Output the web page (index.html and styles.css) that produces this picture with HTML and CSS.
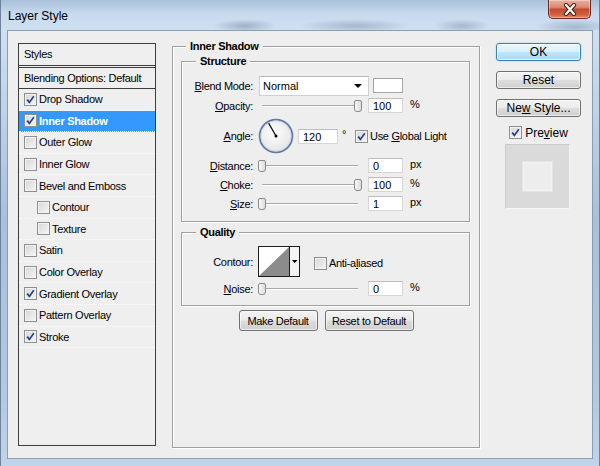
FILE: index.html
```html
<!DOCTYPE html>
<html>

<head>
    <link rel="stylesheet" href="styles.css">
</head>

<body>
    <div class="window">
        <div class="titlebar">
            <span class="title">Layer Style</span>
            <div class="close">
                <svg width="18" height="13" viewBox="0 0 18 13">
                    <path d="M5 2 L13 11 M13 2 L5 11" stroke="#4a2018" stroke-width="4.2" stroke-linecap="round" />
                    <path d="M5 2 L13 11 M13 2 L5 11" stroke="#fff" stroke-width="2.2" stroke-linecap="round" />
                </svg>
            </div>
        </div>

        <div class="client">
            <!-- left list of effects -->
            <div class="styles-list">
                <div class="list-head">Styles</div>
                <div class="list-blend">Blending Options: Default</div>
                <div class="item"><span class="cb on"><svg viewBox="0 0 11 11"><path d="M2.2 5.6 L4.4 8.4 L8.8 2.2" /></svg></span>Drop Shadow</div>
                <div class="item sel"><span class="cb on"><svg viewBox="0 0 11 11"><path d="M2.2 5.6 L4.4 8.4 L8.8 2.2" /></svg></span>Inner Shadow</div>
                <div class="item"><span class="cb"></span>Outer Glow</div>
                <div class="item"><span class="cb"></span>Inner Glow</div>
                <div class="item"><span class="cb"></span>Bevel and Emboss</div>
                <div class="item indent"><span class="cb"></span>Contour</div>
                <div class="item indent"><span class="cb"></span>Texture</div>
                <div class="item"><span class="cb"></span>Satin</div>
                <div class="item"><span class="cb"></span>Color Overlay</div>
                <div class="item"><span class="cb on"><svg viewBox="0 0 11 11"><path d="M2.2 5.6 L4.4 8.4 L8.8 2.2" /></svg></span>Gradient Overlay</div>
                <div class="item"><span class="cb"></span>Pattern Overlay</div>
                <div class="item"><span class="cb on"><svg viewBox="0 0 11 11"><path d="M2.2 5.6 L4.4 8.4 L8.8 2.2" /></svg></span>Stroke</div>
            </div>

            <!-- settings -->
            <div class="group main">
                <div class="legend">Inner Shadow</div>

                <div class="group sub structure">
                    <div class="legend">Structure</div>

                    <div class="row blend">
                        <span class="lbl"><u>B</u>lend Mode:</span>
                        <div class="select"><span>Normal</span><span class="arrow"></span></div>
                        <span class="swatch"></span>
                    </div>

                    <div class="row">
                        <span class="lbl"><u>O</u>pacity:</span>
                        <div class="slider"><span class="thumb max"></span></div>
                        <span class="field">100</span>
                        <span class="unit">%</span>
                    </div>

                    <div class="row angle">
                        <span class="lbl"><u>A</u>ngle:</span>
                        <svg class="dial" width="36" height="36" viewBox="0 0 36 36">
                            <defs>
                                <radialGradient id="dialFill" cx="0.45" cy="0.4" r="0.6">
                                    <stop offset="0" stop-color="#ffffff" />
                                    <stop offset="1" stop-color="#e4e4e4" />
                                </radialGradient>
                            </defs>
                            <circle cx="18" cy="18" r="16.4" fill="url(#dialFill)" stroke="#5f7aa3" stroke-width="1.8" />
                            <circle cx="18" cy="18" r="15.2" fill="none" stroke="#c9d3e2" stroke-width="0.8" />
                            <line x1="18" y1="18" x2="10.6" y2="5.2" stroke="#111" stroke-width="1.3" />
                            <circle cx="18" cy="18" r="1.5" fill="#000" />
                        </svg>
                        <span class="field wide">120</span>
                        <span class="deg">°</span>
                        <span class="cb on"><svg viewBox="0 0 11 11"><path d="M2.2 5.6 L4.4 8.4 L8.8 2.2" /></svg></span>
                        <span class="cb-text">Use <u>G</u>lobal Light</span>
                    </div>

                    <div class="row step">
                        <span class="lbl"><u>D</u>istance:</span>
                        <div class="slider"><span class="thumb"></span></div>
                        <span class="field">0</span>
                        <span class="unit">px</span>
                    </div>

                    <div class="row">
                        <span class="lbl"><u>C</u>hoke:</span>
                        <div class="slider"><span class="thumb max"></span></div>
                        <span class="field">100</span>
                        <span class="unit">%</span>
                    </div>

                    <div class="row">
                        <span class="lbl"><u>S</u>ize:</span>
                        <div class="slider"><span class="thumb"></span></div>
                        <span class="field">1</span>
                        <span class="unit">px</span>
                    </div>
                </div>

                <div class="group sub quality">
                    <div class="legend">Quality</div>

                    <div class="row contour">
                        <span class="lbl">Contour:</span>
                        <svg class="contour-pick" width="42" height="31" viewBox="0 0 42 31">
                            <rect x="0.5" y="0.5" width="41" height="30" fill="#f4f4f4" stroke="#1c1c1c" />
                            <rect x="1" y="1" width="30" height="29" fill="#fff" />
                            <polygon points="1,30 31,1 31,30" fill="#8c8c8c" />
                            <line x1="31.5" y1="1" x2="31.5" y2="30" stroke="#1c1c1c" />
                            <polygon points="34,14 39.5,14 36.75,17" fill="#000" />
                        </svg>
                        <span class="cb aa"></span>
                        <span class="cb-text">Anti-a<u>l</u>iased</span>
                    </div>

                    <div class="row noise">
                        <span class="lbl"><u>N</u>oise:</span>
                        <div class="slider"><span class="thumb"></span></div>
                        <span class="field">0</span>
                        <span class="unit">%</span>
                    </div>
                </div>

                <div class="buttons">
                    <div class="btn make">Make Default</div>
                    <div class="btn reset-def">Reset to Default</div>
                </div>
            </div>

            <!-- right column -->
            <div class="side">
                <div class="btn big ok"><span>OK</span></div>
                <div class="btn big"><span>Reset</span></div>
                <div class="btn big"><span>Ne<u>w</u> Style...</span></div>
                <div class="preview-row">
                    <span class="cb on"><svg viewBox="0 0 11 11"><path d="M2.2 5.6 L4.4 8.4 L8.8 2.2" /></svg></span>
                    <span>Pre<u>v</u>iew</span>
                </div>
                <div class="preview-box"><div class="preview-swatch"></div></div>
            </div>
        </div>
    </div>
</body>

</html>
```

FILE: styles.css
```css
body {
    margin: 0;
    width: 600px;
    height: 466px;
    overflow: hidden;
    font-family: "Liberation Sans", Arial, sans-serif;
    font-size: 11px;
    color: #000;
}

.window {
    height: 466px;
    display: flex;
    flex-direction: column;
    background: linear-gradient(180deg, #a9c0da 0, #c8daee 14px, #cfe0f1 30px, #a8c0dc 220px, #b2c9e2 400px, #c0d5ec 466px);
    box-shadow: inset 1px 0 0 #6f8299, inset -1px 0 0 #6f8299;
}

.titlebar {
    height: 30px;
    flex: none;
    display: flex;
    justify-content: space-between;
    align-items: flex-start;
    background:
        radial-gradient(ellipse 32px 7px at 245px 26px, rgba(70, 92, 125, 0.35), transparent),
        radial-gradient(ellipse 55px 7px at 355px 26px, rgba(70, 92, 125, 0.3), transparent),
        radial-gradient(ellipse 28px 7px at 462px 26px, rgba(70, 92, 125, 0.3), transparent),
        radial-gradient(ellipse 40px 8px at 575px 27px, rgba(70, 92, 125, 0.3), transparent);
}

.title {
    font-size: 12px;
    line-height: 14px;
    margin: 9px 0 0 8px;
}

.close {
    width: 43px;
    height: 19px;
    box-sizing: border-box;
    margin-right: 9px;
    border: 1px solid #6b2a22;
    border-top: none;
    border-radius: 0 0 5px 5px;
    background: linear-gradient(180deg, #e9b0a2 0, #d98a75 40%, #c44a2f 52%, #cf5f3e 80%, #e08a63 100%);
    box-shadow: inset 0 0 0 1px rgba(255, 255, 255, 0.35);
    display: flex;
    justify-content: center;
    align-items: center;
}

.client {
    flex: 1;
    margin: 0 7px 7px;
    border: 1px solid #8c9db3;
    background: #eeeeee;
    display: flex;
    align-items: flex-start;
    padding: 12px 0 0 10px;
}

/* ---------- effects list ---------- */

.styles-list {
    width: 138px;
    height: 403px;
    box-sizing: border-box;
    flex: none;
    border: 1px solid #3e3e3e;
    background: #efefef;
    letter-spacing: -0.3px;
}

.list-head {
    height: 21px;
    line-height: 21px;
    padding-left: 5px;
    border-bottom: 1px solid #3e3e3e;
}

.list-blend {
    height: 20px;
    line-height: 20px;
    padding-left: 5px;
    margin-top: 1px;
    border-top: 1px solid #3e3e3e;
    border-bottom: 1px solid #3e3e3e;
}

.item {
    height: 20.6px;
    display: flex;
    align-items: center;
    padding-left: 5px;
    border-bottom: 1px dotted #fdfdfd;
}

.item.indent {
    padding-left: 18px;
}

.item.sel {
    background: #3399ff;
    color: #fff;
    font-weight: bold;
}

.item .cb {
    margin-right: 2px;
}

.cb {
    width: 13px;
    height: 13px;
    box-sizing: border-box;
    flex: none;
    border: 1px solid #8e8f8f;
    background: linear-gradient(135deg, #d6d6d6, #f6f6f6);
    box-shadow: inset 0 0 0 1px #f3f3f3;
    display: inline-flex;
}

.cb svg {
    width: 11px;
    height: 11px;
}

.cb svg path {
    fill: none;
    stroke: #283f8c;
    stroke-width: 1.7;
}

/* ---------- group boxes ---------- */

.group {
    border: 1px solid #a0a0a0;
    box-shadow: 1px 1px 0 #fff, inset 1px 1px 0 #fff;
}

.main {
    width: 308px;
    height: 402px;
    box-sizing: border-box;
    flex: none;
    margin: 3px 0 0 16px;
}

.legend {
    width: max-content;
    height: 13px;
    line-height: 13px;
    margin: -7px 0 0 13px;
    padding: 0 4px;
    background: #eeeeee;
    font-weight: bold;
    letter-spacing: -0.3px;
}

.sub {
    margin: 8px 9px 0 8px;
}

.sub .legend {
    margin-left: 14px;
}

.structure {
    padding-bottom: 8px;
}

.quality {
    margin-top: 10px;
    padding-bottom: 9px;
}

.row {
    display: flex;
    align-items: center;
    height: 19px;
}

.lbl {
    width: 71px;
    flex: none;
    text-align: right;
    letter-spacing: -0.3px;
}

.row.blend {
    height: 21px;
    margin-top: 7px;
}

.row.angle {
    height: 36px;
    margin-top: 3px;
}

.row.step {
    margin-top: 2px;
}

.row.contour {
    height: 31px;
    margin-top: 7px;
}

.row.noise {
    height: 15px;
    margin-top: 4px;
}

.select {
    width: 110px;
    height: 20px;
    box-sizing: border-box;
    margin-left: 6px;
    border: 1px solid #cfcfcf;
    border-top-color: #b9b9b9;
    background: #fff;
    display: flex;
    align-items: center;
    justify-content: space-between;
    padding: 1px 6px 0 3px;
}

.arrow {
    width: 0;
    height: 0;
    border-left: 4px solid transparent;
    border-right: 4px solid transparent;
    border-top: 4px solid #000;
}

.swatch {
    width: 30px;
    height: 15px;
    box-sizing: border-box;
    margin-left: 4px;
    border: 1px solid #a5a5a5;
    background: #fff;
}

.slider {
    position: relative;
    width: 104px;
    height: 14px;
    margin-left: 5px;
    flex: none;
}

.slider::before {
    content: "";
    position: absolute;
    left: 4px;
    right: 4px;
    top: 6px;
    height: 1px;
    background: #a8a8a8;
    border-bottom: 1px solid #fff;
}

.thumb {
    position: absolute;
    top: 1px;
    left: 0;
    width: 8px;
    height: 12px;
    box-sizing: border-box;
    border: 1px solid #8a8a8a;
    border-radius: 2px 2px 3px 3px;
    background: linear-gradient(90deg, #f8f8f8, #dcdcdc);
}

.thumb.max {
    left: auto;
    right: 0;
}

.field {
    width: 35px;
    height: 15px;
    line-height: 14px;
    box-sizing: border-box;
    margin-left: 6px;
    padding-left: 4px;
    border: 1px solid #d6d6d6;
    border-top-color: #bdbdbd;
    background: #fff;
}

.field.wide {
    width: 40px;
    margin-left: 4px;
}

.unit {
    margin: -3px 0 0 7px;
}

.dial {
    flex: none;
    margin-left: 5px;
}

.deg {
    margin: -5px 0 0 4px;
    width: 9px;
}

.angle .cb {
    margin-left: 4px;
}

.cb-text {
    margin-left: 2px;
    letter-spacing: -0.3px;
}

.contour-pick {
    flex: none;
    margin-left: 5px;
}

.cb.aa {
    margin: 3px 0 0 14px;
}

.contour .cb-text {
    margin-top: 2px;
}

/* ---------- buttons ---------- */

.buttons {
    display: flex;
    justify-content: center;
    gap: 7px;
    margin-top: 4px;
}

.btn {
    height: 21px;
    box-sizing: border-box;
    border: 1px solid #707070;
    border-radius: 3px;
    background: linear-gradient(180deg, #f3f3f3 0, #ebebeb 48%, #dddddd 52%, #cfcfcf 100%);
    box-shadow: inset 0 0 0 1px rgba(255, 255, 255, 0.6);
    display: flex;
    justify-content: center;
    align-items: center;
    letter-spacing: -0.3px;
}

.btn.make {
    width: 79px;
}

.btn.reset-def {
    width: 89px;
}

.side {
    width: 85px;
    flex: none;
    margin-left: 16px;
    display: flex;
    flex-direction: column;
    font-size: 12px;
}

.btn.big {
    height: 18px;
    margin-bottom: 10px;
    letter-spacing: 0;
}

.btn.ok {
    border-color: #3c7fb1;
    background: linear-gradient(180deg, #eaf6fd 0, #d9f0fc 48%, #bee6fd 52%, #a7d9f5 100%);
    box-shadow: inset 0 0 0 1px rgba(255, 255, 255, 0.7), 0 0 2px #8fd0f5;
}

.preview-row {
    height: 13px;
    margin-top: -1px;
    display: flex;
    align-items: center;
    justify-content: center;
    gap: 3px;
}

.preview-box {
    width: 65px;
    height: 65px;
    box-sizing: border-box;
    margin: 5px 0 0 9px;
    border: 1px solid #cbcbcb;
    border-right-color: #f4f4f4;
    border-bottom-color: #f4f4f4;
    background: #dadada;
    display: flex;
    justify-content: center;
    align-items: center;
}

.preview-swatch {
    width: 31px;
    height: 31px;
    box-sizing: border-box;
    border: 1px solid #e4e4e4;
    background: #ededed;
    box-shadow: inset 0 0 3px rgba(255, 255, 255, 0.8);
}
```
